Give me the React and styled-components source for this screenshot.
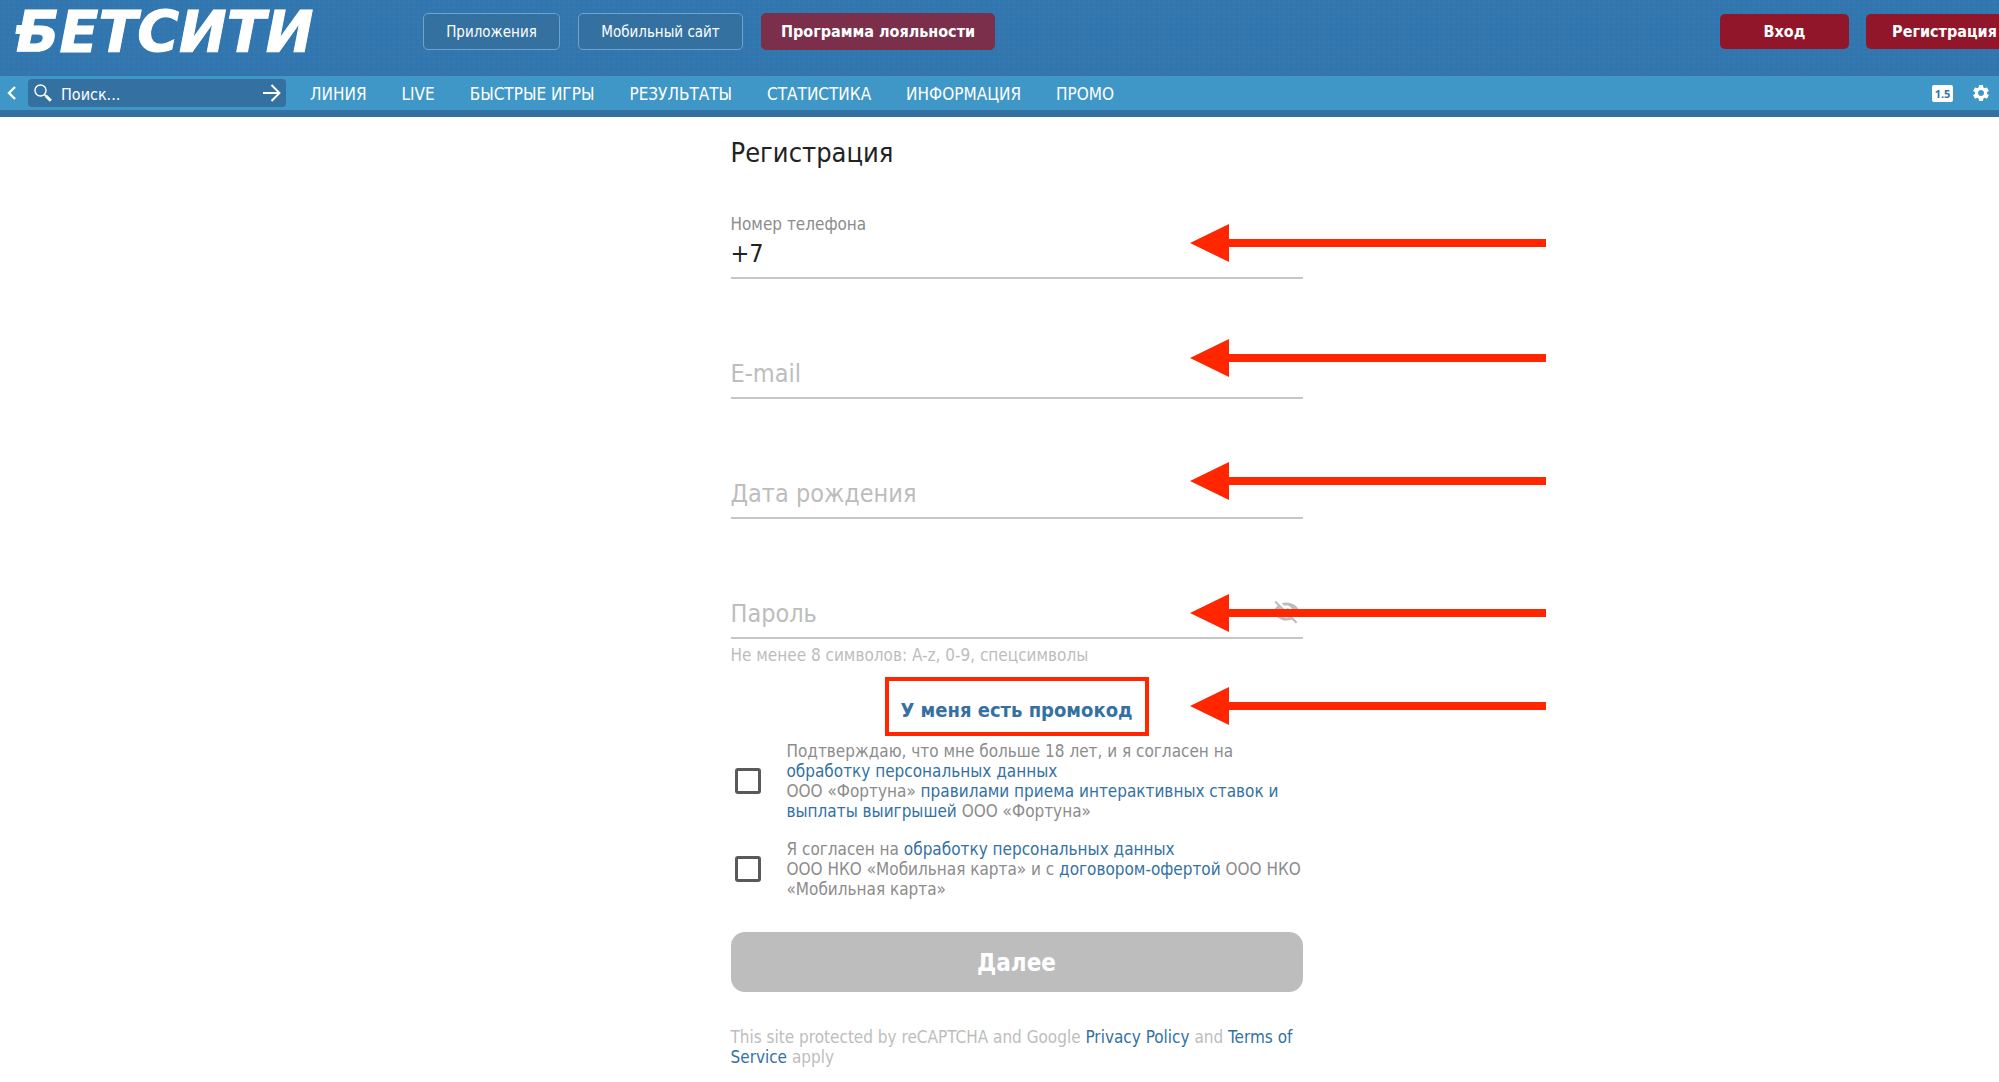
import React from 'react';
import styled, { createGlobalStyle } from 'styled-components';
import { MdSettings, MdVisibilityOff } from 'react-icons/md';

const sans = `'DejaVu Sans Condensed', 'DejaVu Sans', 'Noto Sans', sans-serif`;

const Global = createGlobalStyle`
  *, *::before, *::after { box-sizing: border-box; }
  body { margin: 0; background: #fff; font-family: ${sans}; font-stretch: condensed; }
  button, input { font: inherit; font-stretch: condensed; }
  a { text-decoration: none; }
`;

const Page = styled.div`
  overflow-x: clip;
`;

const TopBar = styled.header`
  display: flex;
  align-items: center;
  height: 76px;
  padding: 0 0 13px 16px;
  background-color: #2b7cba;
  background-image:
    repeating-linear-gradient(90deg, rgba(58, 112, 162, 0.45) 0 3px, transparent 3px 5px),
    repeating-linear-gradient(0deg, rgba(58, 112, 162, 0.45) 0 3px, transparent 3px 5px);
`;

const Logo = styled.a`
  position: relative;
  width: 407px;
  color: #fff;
  font: italic 700 57px/60px 'DejaVu Sans', 'Noto Sans', sans-serif;
  -webkit-text-stroke: 1px #fff;

  &::before {
    content: '';
    position: absolute;
    left: 0;
    top: 23px;
    width: 14px;
    height: 9px;
    background: #fff;
    transform: skewX(-8deg);
  }
`;

const TopLinks = styled.div`
  display: flex;
  flex: 1;
  gap: 18px;
`;

const TopLink = styled.a`
  min-width: ${(p) => p.$width}px;
  height: 37px;
  border: 1px solid ${(p) => (p.$accent ? '#7b2f4b' : '#6fa3cd')};
  border-radius: 5px;
  background: ${(p) => (p.$accent ? '#7b2f4b' : '#3471a1')};
  color: #fff;
  font-size: ${(p) => (p.$accent ? 16 : 15)}px;
  font-weight: ${(p) => (p.$accent ? 700 : 400)};
  line-height: 36px;
  text-align: center;
  white-space: nowrap;
`;

const Account = styled.div`
  display: flex;
  gap: 17px;
  margin-right: -24px;
`;

const AccountButton = styled.button`
  height: 35px;
  min-width: ${(p) => (p.$wide ? 157 : 129)}px;
  padding: 0 0 1px;
  border: 0;
  border-radius: 5px;
  background: #911629;
  color: #fff;
  font-size: 16px;
  font-weight: 700;
`;

const NavBar = styled.nav`
  display: flex;
  align-items: center;
  height: 41px;
  padding: 0 8px 0 6px;
  border-bottom: 7px solid #3471a1;
  background: #3f97c7;
`;

const IconButton = styled.button`
  display: flex;
  padding: 0;
  border: 0;
  background: none;
  color: #fff;
`;

const Search = styled.label`
  display: flex;
  align-items: center;
  width: 258px;
  height: 28px;
  margin: 0 24px 0 10px;
  padding: 0 5px 0 6px;
  border-radius: 4px;
  background: #3471a1;
`;

const SearchInput = styled.input`
  flex: 1;
  min-width: 0;
  padding: 2px 0 0 9px;
  border: 0;
  outline: 0;
  background: none;
  color: #fff;
  font-size: 16px;
  &::placeholder { color: #fff; opacity: 1; }
`;

const Menu = styled.div`
  display: flex;
  flex: 1;
  gap: 35px;
  padding-top: 2px;
`;

const MenuLink = styled.a`
  color: #fff;
  font-size: 17px;
  line-height: 32px;
  white-space: nowrap;
`;

const Tools = styled.div`
  display: flex;
  align-items: center;
  gap: 18px;
`;

const OddsButton = styled.button`
  width: 21px;
  height: 17px;
  padding: 0;
  border: 0;
  border-radius: 2px;
  background: #fff;
  color: #3471a1;
  font: 700 11px/17px 'Open Sans', sans-serif;
`;

const Main = styled.main`
  display: flex;
  justify-content: center;
  padding: 17px 0 8px 34px;
`;

const Form = styled.form`
  width: 572px;
`;

const Title = styled.h1`
  margin: 0 0 32px;
  color: #222;
  font-size: 27px;
  font-weight: 400;
  line-height: 38px;
`;

const Field = styled.div`
  position: relative;
  display: flex;
  flex-direction: column;
  justify-content: flex-end;
  height: ${(p) => (p.$first ? 75 : 120)}px;
  border-bottom: 2px solid #c6c6c6;
`;

const FieldLabel = styled.label`
  color: #8c8c8c;
  font-size: 17px;
  line-height: 20px;
`;

const FloatingLabel = styled.label`
  position: absolute;
  left: 0;
  bottom: 0;
  color: #bdbdbd;
  font-size: 25px;
  line-height: 46px;
  pointer-events: none;
`;

const InputRow = styled.div`
  display: flex;
  align-items: center;
  height: 43px;
  padding-right: 2px;
`;

const Input = styled.input`
  flex: 1;
  min-width: 0;
  height: 43px;
  padding: 0 0 4px;
  border: 0;
  outline: 0;
  background: none;
  color: #222;
  font-size: 25px;
`;

const RevealButton = styled(IconButton)`
  padding-bottom: 8px;
  color: #bdbdbd;
`;

const Hint = styled.p`
  margin: 0;
  padding-top: 6px;
  color: #bdbdbd;
  font-size: 17px;
  line-height: 20px;
`;

const PromoRow = styled.div`
  position: relative;
  display: flex;
  justify-content: center;
  margin: 12px 0 5px;
`;

const PromoButton = styled.button`
  width: 264px;
  height: 59px;
  padding: 6px 0 0;
  border: 4px solid #ff2600;
  background: none;
  color: #3471a1;
  font-size: 20px;
  font-weight: 700;
  white-space: nowrap;
`;

const Consent = styled.div`
  display: flex;
  align-items: center;
  gap: 26px;
  margin: 0 0 18px 4px;
`;

const Checkbox = styled.input`
  appearance: none;
  flex: none;
  width: 26px;
  height: 26px;
  margin: 0;
  border: 3px solid #595959;
  border-radius: 3px;
  background: #fff;
`;

const ConsentText = styled.label`
  color: #8c8c8c;
  font-size: 17px;
  line-height: 20px;
  white-space: nowrap;
`;

const TextLink = styled.a`
  color: #3471a1;
`;

const Submit = styled.button`
  width: 100%;
  height: 60px;
  margin: 15px 0 35px;
  padding: 2px 0 0;
  border: 0;
  border-radius: 14px;
  background: #bdbdbd;
  color: #fff;
  font-size: 24px;
  font-weight: 700;
`;

const Notice = styled.p`
  margin: 0;
  color: #bdbdbd;
  font-size: 17px;
  line-height: 20px;
  white-space: nowrap;
`;

const ArrowSvg = styled.svg`
  position: absolute;
  left: 459px;
  top: ${(p) => p.$top}px;
`;

const Arrow = ({ top }) => (
  <ArrowSvg $top={top} width="356" height="40" viewBox="0 0 356 40" fill="#ff2600" aria-hidden="true">
    <path d="M0 20 39 1v15h317v8H39v15z" />
  </ArrowSvg>
);

const MENU = ['ЛИНИЯ', 'LIVE', 'БЫСТРЫЕ ИГРЫ', 'РЕЗУЛЬТАТЫ', 'СТАТИСТИКА', 'ИНФОРМАЦИЯ', 'ПРОМО'];

export default function App() {
  return (
    <Page>
      <Global />
      <TopBar>
        <Logo href="#">БЕТСИТИ</Logo>
        <TopLinks>
          <TopLink href="#" $width={137}>Приложения</TopLink>
          <TopLink href="#" $width={165}>Мобильный сайт</TopLink>
          <TopLink href="#" $width={234} $accent>Программа лояльности</TopLink>
        </TopLinks>
        <Account>
          <AccountButton>Вход</AccountButton>
          <AccountButton $wide>Регистрация</AccountButton>
        </Account>
      </TopBar>
      <NavBar>
        <IconButton aria-label="Назад">
          <svg width="12" height="16" viewBox="0 0 12 16" fill="none" stroke="#fff" strokeWidth="2.4">
            <path d="M9 2 3 8l6 6" />
          </svg>
        </IconButton>
        <Search>
          <svg width="18" height="18" viewBox="0 0 18 18" fill="none" stroke="#fff" aria-hidden="true">
            <circle cx="6.5" cy="6.5" r="5.5" strokeWidth="1.4" />
            <path d="m10.5 10.5 1.5 1.5" strokeWidth="1.5" />
            <path d="m11.8 11.8 5 5" strokeWidth="3" />
          </svg>
          <SearchInput placeholder="Поиск..." aria-label="Поиск" />
          <IconButton aria-label="Найти">
            <svg width="18" height="18" viewBox="0 0 18 18" fill="none" stroke="#fff" strokeWidth="1.9">
              <path d="M0 9h16M8.500 1l8 8-8 8" />
            </svg>
          </IconButton>
        </Search>
        <Menu>
          {MENU.map((m) => <MenuLink key={m} href="#">{m}</MenuLink>)}
        </Menu>
        <Tools>
          <OddsButton>1.5</OddsButton>
          <IconButton aria-label="Настройки"><MdSettings size={20} /></IconButton>
        </Tools>
      </NavBar>
      <Main>
        <Form onSubmit={(e) => e.preventDefault()}>
          <Title>Регистрация</Title>
          <Field $first>
            <FieldLabel htmlFor="phone">Номер телефона</FieldLabel>
            <InputRow>
              <Input id="phone" type="tel" defaultValue="+7" />
            </InputRow>
            <Arrow top={19} />
          </Field>
          <Field>
            <InputRow>
              <Input id="email" type="email" />
            </InputRow>
            <FloatingLabel htmlFor="email">E-mail</FloatingLabel>
            <Arrow top={59} />
          </Field>
          <Field>
            <InputRow>
              <Input id="birth" />
            </InputRow>
            <FloatingLabel htmlFor="birth">Дата рождения</FloatingLabel>
            <Arrow top={62} />
          </Field>
          <Field>
            <InputRow>
              <Input id="password" type="password" />
              <RevealButton type="button" aria-label="Показать пароль">
                <MdVisibilityOff size={29} />
              </RevealButton>
            </InputRow>
            <FloatingLabel htmlFor="password">Пароль</FloatingLabel>
            <Arrow top={74} />
          </Field>
          <Hint>Не менее 8 символов: A-z, 0-9, спецсимволы</Hint>
          <PromoRow>
            <PromoButton type="button">У меня есть промокод</PromoButton>
            <Arrow top={9} />
          </PromoRow>
          <Consent>
            <Checkbox type="checkbox" id="adult" />
            <ConsentText htmlFor="adult">
              Подтверждаю, что мне больше 18 лет, и я согласен на<br />
              <TextLink href="#">обработку персональных данных</TextLink><br />
              ООО «Фортуна» <TextLink href="#">правилами приема интерактивных ставок и<br />
              выплаты выигрышей</TextLink> ООО «Фортуна»
            </ConsentText>
          </Consent>
          <Consent>
            <Checkbox type="checkbox" id="offer" />
            <ConsentText htmlFor="offer">
              Я согласен на <TextLink href="#">обработку персональных данных</TextLink><br />
              ООО НКО «Мобильная карта» и с <TextLink href="#">договором-офертой</TextLink> ООО НКО<br />
              «Мобильная карта»
            </ConsentText>
          </Consent>
          <Submit type="submit">Далее</Submit>
          <Notice>
            This site protected by reCAPTCHA and Google <TextLink href="#">Privacy Policy</TextLink> and <TextLink href="#">Terms of<br />
            Service</TextLink> apply
          </Notice>
        </Form>
      </Main>
    </Page>
  );
}
